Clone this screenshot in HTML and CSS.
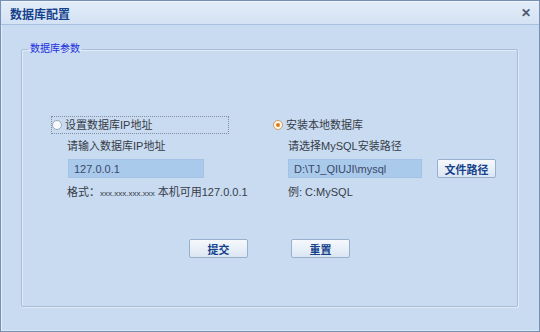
FILE: index.html
```html
<!DOCTYPE html>
<html lang="zh-CN">
  <head>
    <meta charset="UTF-8" />
    <meta name="viewport" content="width=device-width, initial-scale=1.0" />
    <title>数据库配置</title>
    <link rel="stylesheet" href="styles.css">
  </head>

  <body>
    <div class="window">
      <div class="titlebar">
        <span class="title">数据库配置</span>
        <span class="close">✕</span>
      </div>

      <div class="content">
        <fieldset class="group">
          <legend>数据库参数</legend>

          <div class="cols">
            <div class="col col-left">
              <label class="choice focused"><span class="radio"></span>设置数据库IP地址</label>
              <div class="field">
                <div class="caption">请输入数据库IP地址</div>
                <input type="text" class="text ip" value="127.0.0.1" />
                <div class="hint">格式：<span class="mask">xxx.xxx.xxx.xxx</span> 本机可用127.0.0.1</div>
              </div>
            </div>

            <div class="col col-right">
              <label class="choice"><span class="radio checked"></span>安装本地数据库</label>
              <div class="field">
                <div class="caption">请选择MySQL安装路径</div>
                <div class="path-row">
                  <input type="text" class="text path" value="D:\TJ_QIUJI\mysql" />
                  <button type="button" class="btn">文件路径</button>
                </div>
                <div class="hint">例: C:MySQL</div>
              </div>
            </div>
          </div>

          <div class="actions">
            <button type="button" class="btn">提交</button>
            <button type="button" class="btn">重置</button>
          </div>
        </fieldset>
      </div>
    </div>
  </body>
</html>
```

FILE: styles.css
```css
* {
  box-sizing: border-box;
}

body {
  margin: 0;
  font: normal 11px "Liberation Sans", "Noto Sans CJK SC", sans-serif;
  color: #363c48;
}

.window {
  width: 540px;
  height: 332px;
  border: 1px solid #7590b4;
  background-color: #c9dbf0;
  display: flex;
  flex-direction: column;
}

.titlebar {
  height: 24px;
  display: flex;
  align-items: center;
  justify-content: space-between;
  padding: 0 8px 0 9px;
  background: linear-gradient(#e3ecf8, #d3e2f4);
  border-top: 1px solid #eef4fb;
  border-bottom: 1px solid #a9c0dc;
}

.title {
  font-weight: bold;
  color: #15428b;
  font-size: 12px;
}

.close {
  font-weight: bold;
  font-size: 12px;
  color: #4a5870;
}

.content {
  flex: 1;
  display: flex;
  flex-direction: column;
  padding: 16px 21px 23px 19px;
  border-left: 1px solid #e4edf8;
  border-bottom: 1px solid #dce7f4;
}

.group {
  flex: 1;
  margin: 0;
  padding: 59px 0 0 29px;
  border: 1px solid #a7bdd8;
  border-radius: 2px;
  box-shadow: 1px 1px 0 #e2ecf7, inset 1px 1px 0 #e2ecf7;
  min-width: 0;
}

.group legend {
  margin-left: -23px;
  padding: 0 2px;
  line-height: 16px;
  font-size: 10px;
  color: #1b2de0;
}

.cols {
  display: flex;
}

.col-left {
  width: 222px;
}

.choice {
  display: flex;
  align-items: center;
  height: 18px;
  line-height: 18px;
}

.focused {
  width: 178px;
  border: 1px dotted #7f8ea3;
}

.radio {
  width: 10px;
  height: 10px;
  border-radius: 50%;
  border: 1px solid #9aa9bb;
  background: #f7f9fc;
  margin: 0 3px 0 0;
  position: relative;
}

.checked {
  border-color: #c99c6a;
  background: #fff7ec;
}

.checked::after {
  content: "";
  position: absolute;
  left: 2px;
  top: 2px;
  width: 4px;
  height: 4px;
  border-radius: 50%;
  background: #e07b1a;
}

.field {
  padding-left: 16px;
}

.col-right .field {
  padding-left: 15px;
}

.caption {
  margin-top: 5px;
  line-height: 14px;
}

.text {
  display: block;
  margin: 6px 0 0 1px;
  height: 19px;
  padding: 0 5px;
  border: 1px solid #a4c2e6;
  background-color: #aacaec;
  font: normal 11px "Liberation Sans", sans-serif;
  color: #3a4968;
}

.ip {
  width: 136px;
}

.path-row {
  display: flex;
  align-items: flex-end;
  gap: 15px;
}

.path {
  width: 134px;
  margin-left: 0;
}

.hint {
  margin-top: 7px;
  line-height: 14px;
}

.mask {
  font-size: 8px;
}

.btn {
  width: 59px;
  height: 19px;
  padding: 0;
  border: 1px solid #98b0cc;
  border-radius: 2px;
  background: linear-gradient(#f6f9fd, #dbe6f3);
  font: bold 11px "Liberation Sans", "Noto Sans CJK SC", sans-serif;
  color: #15428b;
  cursor: pointer;
}

.actions {
  display: flex;
  justify-content: center;
  gap: 43px;
  margin: 38px 0 0 -29px;
}
```
